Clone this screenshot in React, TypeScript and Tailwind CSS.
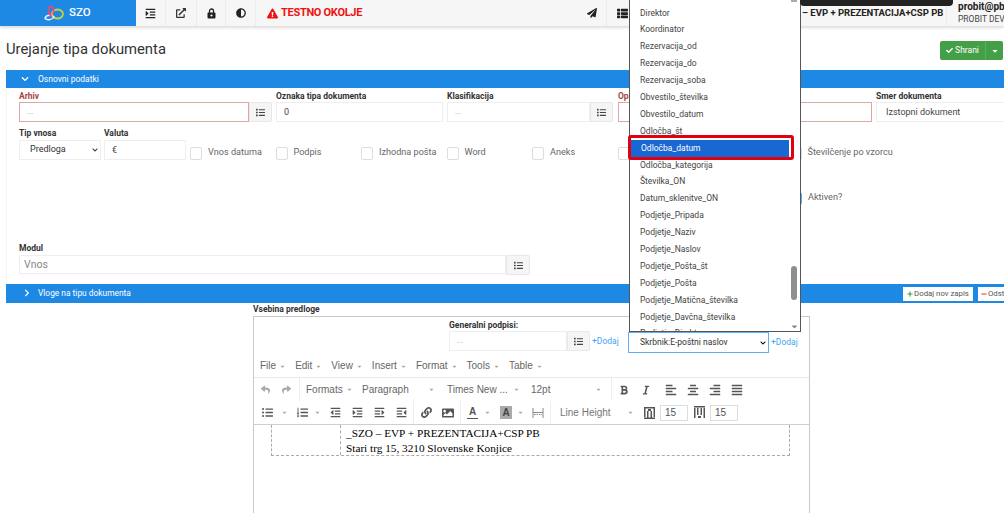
import {
  FaAdjust,
  FaAlignCenter,
  FaAlignJustify,
  FaAlignLeft,
  FaAlignRight,
  FaBold,
  FaCaretDown,
  FaCheck,
  FaChevronDown,
  FaChevronRight,
  FaExclamationTriangle,
  FaExternalLinkAlt,
  FaImage,
  FaIndent,
  FaItalic,
  FaLink,
  FaList,
  FaListOl,
  FaListUl,
  FaMinus,
  FaOutdent,
  FaPaperPlane,
  FaPlus,
  FaReply,
  FaShare,
  FaThList,
} from "react-icons/fa";

const options = [
  "Direktor",
  "Koordinator",
  "Rezervacija_od",
  "Rezervacija_do",
  "Rezervacija_soba",
  "Obvestilo_številka",
  "Obvestilo_datum",
  "Odločba_št",
  "Odločba_datum",
  "Odločba_kategorija",
  "Številka_ON",
  "Datum_sklenitve_ON",
  "Podjetje_Pripada",
  "Podjetje_Naziv",
  "Podjetje_Naslov",
  "Podjetje_Pošta_št",
  "Podjetje_Pošta",
  "Podjetje_Matična_številka",
  "Podjetje_Davčna_številka",
  "Podjetje_Direktor",
];

function Label({ children, red }: { children: React.ReactNode; red?: boolean }) {
  return (
    <div className={`text-[8.5px] font-bold pt-[1px] leading-[11px] whitespace-nowrap ${red ? "text-[#a94442]" : "text-[#333]"}`}>
      {children}
    </div>
  );
}

function ListButton({ className }: { className?: string }) {
  return (
    <div className={`w-[23px] h-[20px] shrink-0 bg-[#f5f5f5] border border-[#e8e8e8] rounded-r-[2px] flex items-center justify-center text-[#444] ${className ?? ""}`}>
      <FaList size={9} />
    </div>
  );
}

function Check({ label, w }: { label: string; w: string }) {
  return (
    <div className={`flex items-center shrink-0 h-[20px] mt-[16px] ${w}`}>
      <div className="w-[12px] h-[13px] border border-[#dddddd] rounded-[2px] bg-white mr-[6px] shrink-0" />
      <span className="text-[9.1px] text-[#666] whitespace-nowrap">{label}</span>
    </div>
  );
}

function MenuItem({ label }: { label: string }) {
  return (
    <span className="flex items-center gap-[3px] text-[#666]">
      {label}
      <FaCaretDown size={7} className="text-[#aaa]" />
    </span>
  );
}

function Caret() {
  return <FaCaretDown size={7} className="text-[#aaa] shrink-0" />;
}

function RowIcon({ dotBottom }: { dotBottom?: boolean }) {
  return (
    <svg width="11" height="13" viewBox="0 0 11 13" fill="#555" className="shrink-0">
      <rect x="0" y={dotBottom ? 0 : 1} width="11" height="1.500" />
      <rect x="0" y={dotBottom ? 2 : 1} width="1.500" height="10" />
      <rect x="3" y={dotBottom ? 2 : 5} width="1.500" height={dotBottom ? 7 : 7} />
      <rect x="6.500" y={dotBottom ? 2 : 5} width="1.500" height={dotBottom ? 7 : 7} />
      <rect x="9.500" y={dotBottom ? 2 : 1} width="1.500" height="10" />
      <rect x="4" y={dotBottom ? 10 : 3} width="3" height="2" />
      {!dotBottom && <rect x="0" y="11.500" width="11" height="1.500" />}
    </svg>
  );
}

export default function App() {
  return (
    <div className="relative w-[1004px] h-[513px] overflow-hidden bg-white text-[#333] font-['Roboto',sans-serif]">
      {/* Top bar */}
      <header className="flex h-[27px] bg-[#f6f6f6] border-b border-[#e3e3e3] shadow-sm">
        <div className="w-[136px] shrink-0 bg-[#1e88e5] flex items-center pl-[44px] gap-[5px]">
          <svg width="20" height="16" viewBox="0 0 20 16" fill="none">
            <ellipse cx="13.500" cy="9" rx="5.500" ry="4.500" stroke="#c6cf3c" strokeWidth="1.800" />
            <path d="M1 13C3 9 8 10 10 12C8 15.500 2 15.500 1 13Z" stroke="#e8f3fb" strokeWidth="1.500" />
            <path d="M8 12C3 7 4 1.500 7 1.500C10 1.500 10 6 9 10" stroke="#e5487f" strokeWidth="1.600" />
          </svg>
          <span className="text-white font-medium text-[11.5px]">SZO</span>
        </div>
        <div className="w-[30px] shrink-0 flex items-center justify-center border-r border-[#ececec]"><FaIndent size={11} className="text-[#222]" /></div>
        <div className="w-[31px] shrink-0 flex items-center justify-center border-r border-[#ececec]"><FaExternalLinkAlt size={10} className="text-[#333]" /></div>
        <div className="w-[29px] shrink-0 flex items-center justify-center border-r border-[#ececec]">
          <svg width="9" height="11" viewBox="0 0 9 11">
            <path d="M2.500 5V3a2 2 0 0 1 4 0v2" fill="none" stroke="#222" strokeWidth="1.300" />
            <rect x="0.500" y="4.500" width="8" height="6" rx="1" fill="#222" />
            <circle cx="4.500" cy="7.500" r="1.100" fill="#f6f6f6" />
          </svg>
        </div>
        <div className="w-[30px] shrink-0 flex items-center justify-center border-r border-[#ececec]"><FaAdjust size={10} className="text-[#222]" /></div>
        <div className="w-[321px] shrink-0 flex items-center gap-[3px] pl-[11px] text-[#f01010] font-bold text-[11px] tracking-[-0.3px] whitespace-nowrap">
          <FaExclamationTriangle size={11} />
          TESTNO OKOLJE
        </div>
        <div className="w-[30px] shrink-0 flex items-center justify-center border-r border-[#ececec]"><FaPaperPlane size={10} className="text-[#222]" /></div>
        <div className="w-[30px] shrink-0 flex items-center justify-center"><FaThList size={11} className="text-[#222]" /></div>
        <div className="w-[310px] shrink-0 pl-[165px] flex items-center text-[9.5px] font-bold text-[#222] whitespace-nowrap border-r border-[#ececec]">
          – EVP + PREZENTACIJA+CSP PB
        </div>
        <div className="pl-[11px] shrink-0 whitespace-nowrap">
          <div className="text-[10px] font-bold text-[#222] leading-[12px] mt-[1px]">probit@pb5</div>
          <div className="text-[8.5px] text-[#444] leading-[10px] mt-[1px]">PROBIT DEVEL</div>
        </div>
      </header>

      {/* Title */}
      <div className="flex items-start justify-between h-[43px] pl-[6px] pr-[1px] pt-[12px]">
        <h1 className="text-[14.8px] leading-[20px] text-[#333]">Urejanje tipa dokumenta</h1>
        <div className="flex h-[19px] mt-[2px] bg-[#43a047] text-white text-[8.5px] rounded-[2px]">
          <div className="w-[46px] flex items-center justify-center gap-[2px] border-r border-[#5bb05f]">
            <FaCheck size={7} /> Shrani
          </div>
          <div className="w-[17px] flex items-center justify-center"><FaCaretDown size={8} /></div>
        </div>
      </div>

      {/* Osnovni podatki */}
      <div className="ml-[6px] h-[18px] bg-[#1e88e5] flex items-center text-white text-[8.5px] pl-[15px]">
        <FaChevronDown size={8} />
        <span className="ml-[9px]">Osnovni podatki</span>
      </div>
      <div className="ml-[6px] h-[196px] border-l border-[#f4f4f4] pl-[12px] pt-[2px]">
        <div className="flex gap-[4px]">
          <div className="w-[253px] shrink-0">
            <Label red>Arhiv</Label>
            <div className="flex">
              <div className="w-[230px] h-[20px] border border-[#e0a6a6] bg-white text-[8px] text-[#aaa] pl-[7px] leading-[18px]">...</div>
              <ListButton />
            </div>
          </div>
          <div className="w-[167px] shrink-0">
            <Label>Oznaka tipa dokumenta</Label>
            <div className="h-[20px] border border-[#eeeeee] text-[9px] pl-[7px] leading-[18px] text-[#444]">0</div>
          </div>
          <div className="w-[167px] shrink-0">
            <Label>Klasifikacija</Label>
            <div className="flex">
              <div className="w-[143px] h-[20px] border border-[#eeeeee] text-[8px] text-[#aaa] pl-[7px] leading-[18px]">...</div>
              <ListButton />
            </div>
          </div>
          <div className="w-[254px] shrink-0">
            <Label red>Opis</Label>
            <div className="h-[20px] border border-[#e0a6a6]" />
          </div>
          <div className="w-[140px] shrink-0">
            <Label>Smer dokumenta</Label>
            <div className="h-[20px] border border-[#eeeeee] text-[9px] pl-[9px] leading-[18px] text-[#444] whitespace-nowrap">Izstopni dokument</div>
          </div>
        </div>

        <div className="flex mt-[5px] h-[34px]">
          <div className="w-[85px] shrink-0">
            <Label>Tip vnosa</Label>
            <div className="w-[82px] h-[20px] mt-[1px] border border-[#eeeeee] text-[9px] pl-[10px] flex items-center justify-between pr-[2px] text-[#333]">
              Predloga
              <FaChevronDown size={6} />
            </div>
          </div>
          <div className="w-[104px] shrink-0">
            <Label>Valuta</Label>
            <div className="w-[82px] h-[20px] mt-[1px] border border-[#eeeeee] text-[9px] pl-[7px] leading-[18px] text-[#444]">€</div>
          </div>
          <div className="-ml-[18px] flex">
            <Check label="Vnos datuma" w="w-[85.500px]" />
            <Check label="Podpis" w="w-[85.500px]" />
            <Check label="Izhodna pošta" w="w-[85.500px]" />
            <Check label="Word" w="w-[85.500px]" />
            <Check label="Aneks" w="w-[85.500px]" />
            <Check label="" w="w-[172px]" />
            <Check label="Številčenje po vzorcu" w="w-[110px]" />
          </div>
        </div>

        <div className="h-[81px] pt-[30px] pl-[771px]">
          <div className="flex items-center h-[14px] text-[9.1px] text-[#666]">
            <div className="w-[12px] h-[13px] border border-[#64aef5] rounded-[2px] mr-[6px] shrink-0" />
            Aktiven?
          </div>
        </div>

        <div>
          <Label>Modul</Label>
          <div className="flex mt-[1px]">
            <div className="w-[487px] h-[19px] border border-[#eeeeee] text-[10.5px] text-[#888] pl-[4px] leading-[17px]">Vnos</div>
            <ListButton className="h-[19px] w-[24px]" />
          </div>
        </div>
      </div>

      {/* Vloge */}
      <div className="ml-[6px] h-[19px] bg-[#1e88e5] flex items-center justify-between text-white text-[8.4px] pl-[17px]">
        <div className="flex items-center">
          <FaChevronRight size={8} />
          <span className="ml-[7px]">Vloge na tipu dokumenta</span>
        </div>
        <div className="flex gap-[5px] w-[101px] overflow-hidden">
          <div className="h-[14px] w-[70px] shrink-0 bg-white text-[#555] flex items-center justify-center gap-[1px] text-[7.8px] whitespace-nowrap">
            <FaPlus size={6} className="text-[#43a047]" /> Dodaj nov zapis
          </div>
          <div className="h-[14px] w-[40px] shrink-0 bg-white text-[#555] flex items-center pl-[3px] gap-[1px] text-[7.8px] whitespace-nowrap">
            <FaMinus size={6} className="text-[#e53935]" /> Odstrani
          </div>
        </div>
      </div>

      {/* Editor */}
      <div className="ml-[253px] w-[557px]">
        <div className="text-[8.5px] font-bold text-[#333] leading-[13px]">Vsebina predloge</div>
        <div className="h-[198px] border border-[#c8c8c8] border-b-0">
          <div className="h-[60px]">
            <div className="flex pl-[195px] pt-[3px]">
              <div className="w-[175px]">
                <div className="text-[8.5px] font-bold leading-[11px] text-[#333]">Generalni podpisi:</div>
                <div className="flex items-center">
                  <div className="w-[118px] h-[20px] border border-[#eeeeee] text-[8px] text-[#aaa] pl-[7px] leading-[18px]">...</div>
                  <ListButton />
                  <span className="text-[8.5px] text-[#42a5f5] ml-[2px] whitespace-nowrap">+Dodaj</span>
                </div>
              </div>
            </div>
            <div className="flex gap-[9px] pl-[6px] text-[10px] leading-[12px] pt-[9px] font-['Liberation_Sans',sans-serif]">
              <MenuItem label="File" />
              <MenuItem label="Edit" />
              <MenuItem label="View" />
              <MenuItem label="Insert" />
              <MenuItem label="Format" />
              <MenuItem label="Tools" />
              <MenuItem label="Table" />
            </div>
          </div>
          <div className="h-[48px] border-b border-[#cfcfcf] border-t border-t-[#e9e9e9] text-[10px] text-[#666] font-['Liberation_Sans',sans-serif]">
            <div className="flex items-center h-[23px]">
              <div className="w-[46px] pl-[7px] h-full flex items-center gap-[12px] border-r border-[#eeeeee] text-[#aaa]">
                <FaReply size={9} /><FaShare size={9} />
              </div>
              <div className="w-[62px] pl-[6px] flex items-center gap-[3px]">Formats <Caret /></div>
              <div className="w-[85px] flex items-center justify-between pr-[12px]">Paragraph <Caret /></div>
              <div className="w-[84px] flex items-center gap-[5px] whitespace-nowrap">Times New ... <Caret /></div>
              <div className="w-[81px] flex items-center justify-between pr-[9px] h-full border-r border-[#eeeeee]">12pt <Caret /></div>
              <div className="flex items-center pl-[7px] gap-[12px] h-full text-[#555]">
                <FaBold size={10} /><FaItalic size={10} />
              </div>
              <div className="flex items-center pl-[14px] gap-[10px] h-full text-[#555]">
                <FaAlignLeft size={12} /><FaAlignCenter size={12} /><FaAlignRight size={12} /><FaAlignJustify size={12} />
              </div>
            </div>
            <div className="flex items-center h-[23px] text-[#555]">
              <div className="flex items-center pl-[8px] gap-[8px]">
                <FaListUl size={11} /><Caret />
              </div>
              <div className="flex items-center pl-[9px] gap-[6px]">
                <FaListOl size={11} /><Caret />
              </div>
              <div className="flex items-center pl-[9px] gap-[11px] pr-[6px] border-r border-[#eeeeee] h-full">
                <FaOutdent size={11} /><FaIndent size={11} /><FaOutdent size={11} className="-scale-x-100" /><FaIndent size={11} className="-scale-x-100" />
              </div>
              <div className="flex items-center pl-[7px] gap-[10px] pr-[6px] border-r border-[#eeeeee] h-full">
                <FaLink size={11} /><FaImage size={12} />
              </div>
              <div className="flex items-center pl-[6px] pr-[6px] h-full border-r border-[#eeeeee]">
                <span className="w-[11px] text-center font-bold text-[10px] leading-[12px] text-[#555] border-b border-[#555]">A</span>
                <span className="ml-[6px]"><Caret /></span>
                <span className="ml-[9px] bg-[#aaa] w-[12px] text-center font-bold text-[10px] leading-[13px] text-[#444]">A</span>
                <span className="ml-[5px]"><Caret /></span>
                <svg width="12" height="12" viewBox="0 0 12 12" fill="none" stroke="#888" className="ml-[8px]">
                  <path d="M1 1V11M11 1V11M1 5.500H11" strokeWidth="1" />
                  <path d="M2 7.500H10" strokeWidth="1.200" strokeDasharray="1.500 1" />
                </svg>
              </div>
              <div className="pl-[9px] h-full flex items-center w-[93px] gap-[16px] whitespace-nowrap text-[#777]">Line Height <Caret /></div>
              <RowIcon />
              <div className="w-[28px] h-[16px] ml-[5px] border border-[#ddd] text-[10px] leading-[14px] pl-[4px]">15</div>
              <span className="ml-[6px]"><RowIcon dotBottom /></span>
              <div className="w-[28px] h-[16px] ml-[5px] border border-[#ddd] text-[10px] leading-[14px] pl-[4px]">15</div>
            </div>
          </div>
          <div className="ml-[17px] w-[519px] h-[31px] flex border border-t-0 border-dashed border-[#aaa] font-['Liberation_Serif',serif] text-[11.25px] text-black leading-[15px]">
            <div className="w-[69px] border-r border-dashed border-[#aaa]" />
            <div className="pl-[5px] pt-[1px] whitespace-nowrap">
              <div>_SZO – EVP + PREZENTACIJA+CSP PB</div>
              <div>Stari trg 15, 3210 Slovenske Konjice</div>
            </div>
          </div>
        </div>
      </div>

      {/* Open select list */}
      <div className="absolute left-[629px] top-0 w-[172px] h-[332px] bg-white border border-[#555] border-t-0 overflow-hidden text-[8.5px] text-[#444]">
        {options.map((o, i) => (
          <div
            key={o}
            className={`h-[16.9px] leading-[16.9px] pl-[10px] whitespace-nowrap ${i === 0 ? "mt-[4.500px]" : ""} ${o === "Odločba_datum" ? "bg-[#1967d2] text-white mx-[1px] pl-[9px] w-[158px]" : ""}`}
          >
            {o}
          </div>
        ))}
        <div className="absolute right-0 top-0 bottom-0 w-[11px] bg-white">
          <div className="absolute top-0 left-[2px] w-[6px] h-[2px] bg-[#aaa]" />
          <div className="absolute top-[266px] left-[2px] w-[6px] h-[34px] rounded-full bg-[#8f8f8f]" />
          <FaCaretDown size={9} className="absolute bottom-[0px] left-[1px] text-[#888]" />
        </div>
      </div>
      <div className="absolute left-[628px] top-[135px] w-[166px] h-[25px] border-[3px] border-[#e00010] rounded-[3px]" />

      <div className="absolute left-[628px] top-[332px] w-[141px] h-[21px] bg-white border border-[#64aef5] flex items-center justify-between pl-[11px] pr-[2px] text-[8.5px] text-[#333]">
        Skrbnik:E-poštni naslov
        <FaChevronDown size={6} className="text-black" />
      </div>
      <span className="absolute left-[771px] top-[336px] text-[8.5px] leading-[12px] text-[#42a5f5]">+Dodaj</span>

      {/* Toast peeking out at the top */}
      <div className="absolute left-[800px] -top-[10px] w-[153px] h-[16px] bg-[#222] rounded-[4px]" />
    </div>
  );
}
